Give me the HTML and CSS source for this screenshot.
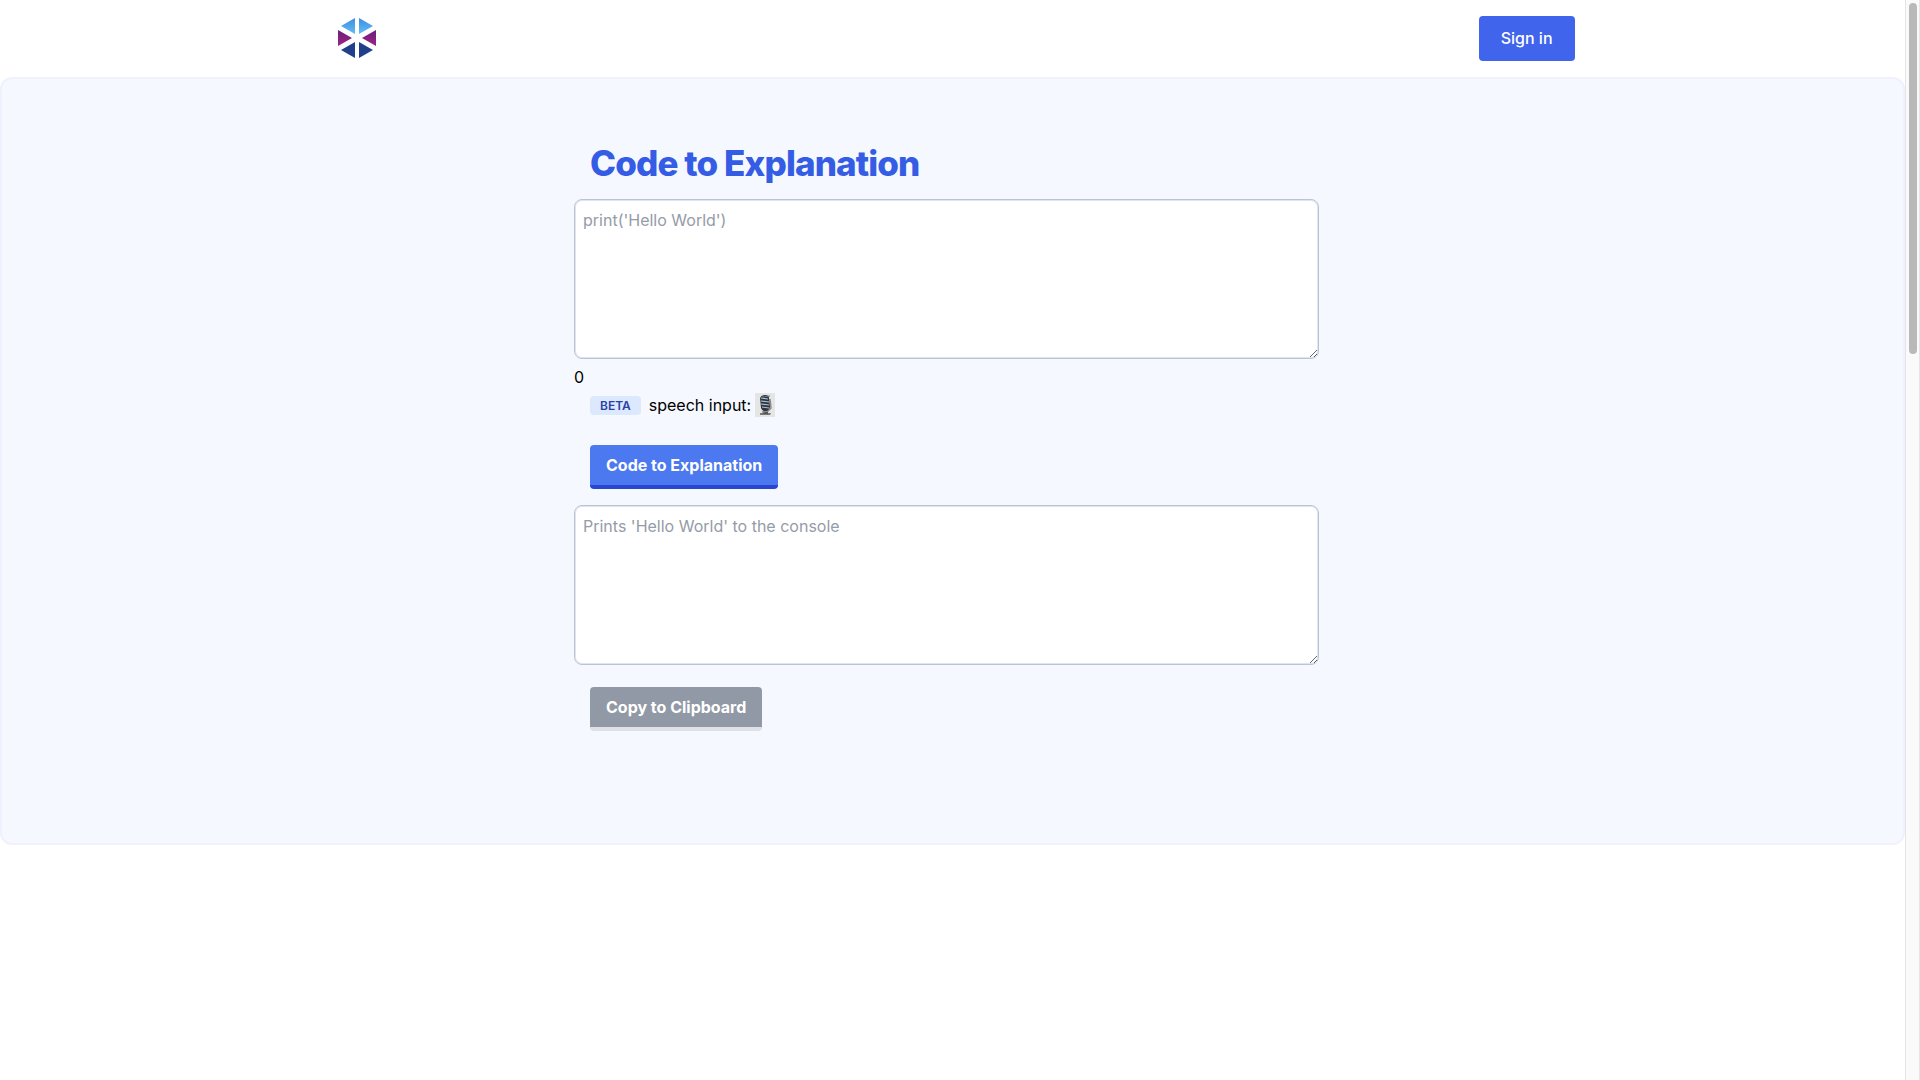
FILE: index.html
```html
<!DOCTYPE html>
<html lang="en">
<head>
<meta charset="utf-8">
<meta name="viewport" content="width=device-width, initial-scale=1">
<title>Code to Explanation</title>
<link rel="stylesheet" href="styles.css">
</head>
<body>
<header class="site-header">
  <nav class="nav">
    <a class="logo" href="#" aria-label="Home">
      <svg width="40" height="42" viewBox="0 0 40 42" aria-hidden="true">
        <defs>
          <linearGradient id="sky" x1="0" y1="0" x2="0" y2="1"><stop offset="0" stop-color="#3b8de0"/><stop offset="1" stop-color="#63bdf8"/></linearGradient>
          <linearGradient id="plum" x1="0" y1="0" x2="0" y2="1"><stop offset="0" stop-color="#6a1f7c"/><stop offset="1" stop-color="#a02383"/></linearGradient>
        </defs>
        <path fill="url(#sky)" d="M18 0v16L4 8zM22 0v16l14-8z"/>
        <path fill="url(#plum)" d="M1 12l14 8-14 8zM39 12l-14 8 14 8z"/>
        <path fill="#21408c" d="M18 24v16L4 32zM22 24v16l14-8z"/>
      </svg>
    </a>
    <button class="sign-in" type="button">Sign in</button>
  </nav>
</header>
<main class="panel">
  <form class="converter">
    <h1 class="title">Code to Explanation</h1>
    <textarea class="box" aria-label="Code" placeholder="print('Hello World')"></textarea>
    <p class="count">0</p>
    <div class="speech">
      <span class="badge">BETA</span>
      <label for="mic">speech input:</label>
      <button class="mic" id="mic" type="button" aria-label="Speech input">
        <svg width="16" height="22" viewBox="0 0 16 22" aria-hidden="true">
          <path d="M3 19h11l-1 2H3z" fill="#777"/>
          <path d="M7 15h4v5H6z" fill="#555"/>
          <path d="M13 5l1 9-3 3-6 1" fill="none" stroke="#8a8a8a" stroke-width="1.5"/>
          <path d="M3 4Q4 1 8 1q4 0 4 3l1 9q-1 4-5 4-3 0-4-3z" fill="#30343c"/>
          <path d="M4 4l7 1M4 7l8 1M4 10l8 1M5 13l7 1" stroke="#a9c1da" stroke-width="1.2"/>
          <path d="M5 3l8-1" stroke="#687686"/>
        </svg>
      </button>
    </div>
    <button class="action" type="button">Code to Explanation</button>
    <textarea class="box" aria-label="Explanation" placeholder="Prints 'Hello World' to the console"></textarea>
    <button class="action action-copy" type="button">Copy to Clipboard</button>
  </form>
</main>
<div class="scroll-track" aria-hidden="true"><div class="scroll-thumb"></div></div>
</body>
</html>
```
FILE: styles.css
```css
* { box-sizing: border-box; }

body {
  margin: 0;
  padding-right: 15px;
  background: #fff;
  color: #000;
  font: 16px/24px Inter, "Liberation Sans", sans-serif;
}

button, textarea { font: inherit; }
button { border: 0; cursor: pointer; }

.nav {
  display: flex;
  align-items: center;
  justify-content: space-between;
  max-width: 1280px;
  margin: 0 auto;
  padding: 16px 18px 16px 24px;
}

.logo { display: flex; }

.sign-in {
  padding: 10px 22px 11px;
  border-radius: 4px;
  background: #4064eb;
  color: #fff;
  font-weight: 500;
}

.panel {
  padding: 64px 0 112px;
  border: 2px solid #f0f1fe;
  border-radius: 12px;
  background: #f5f8ff;
}

.converter {
  display: flex;
  flex-direction: column;
  align-items: flex-start;
  max-width: 757px;
  margin: 0 auto;
  padding-right: 12px;
}

.title {
  margin: 0 16px 16px;
  color: #355ce4;
  font-size: 35px;
  line-height: 40px;
  font-weight: 800;
  letter-spacing: -0.025em;
}

.box {
  display: block;
  width: 100%;
  height: 160px;
  padding: 8px;
  border: 1px solid #bfc3cc;
  border-radius: 8px;
  box-shadow: inset 0 0 0 1px #dbe4f8;
  background: #fff;
  resize: vertical;
}

.box::placeholder { color: #959ba8; opacity: 1; }

.count { margin: 6px 0 4px; }

.speech {
  display: flex;
  align-items: center;
  gap: 4px;
  margin: 0 16px 28px;
}

.badge {
  margin-right: 4px;
  padding: 2px 10px 1px;
  border-radius: 4px;
  background: #dce8fe;
  color: #2c40a6;
  font-size: 12px;
  line-height: 16px;
  font-weight: 600;
}

.mic {
  display: flex;
  align-items: center;
  justify-content: center;
  width: 20px;
  height: 24px;
  padding: 0;
  background: #e5e5e5;
}

.action {
  margin: 0 16px 16px;
  padding: 8px 16px;
  border-bottom: 4px solid #2946d2;
  border-radius: 4px;
  background: #4c78f0;
  color: #fff;
  font-weight: 700;
}

.action-copy {
  margin: 22px 16px 0;
  border-color: #dfe1e7;
  background: #9299a6;
}

.scroll-track {
  position: fixed;
  top: 0;
  right: 0;
  bottom: 0;
  width: 15px;
  padding: 3px;
  border: solid #e5e5e5;
  border-width: 0 1px;
  background: #fafafa;
}

.scroll-thumb {
  width: 8px;
  height: 351px;
  border-radius: 4px;
  background: #b9b9b9;
}
```
